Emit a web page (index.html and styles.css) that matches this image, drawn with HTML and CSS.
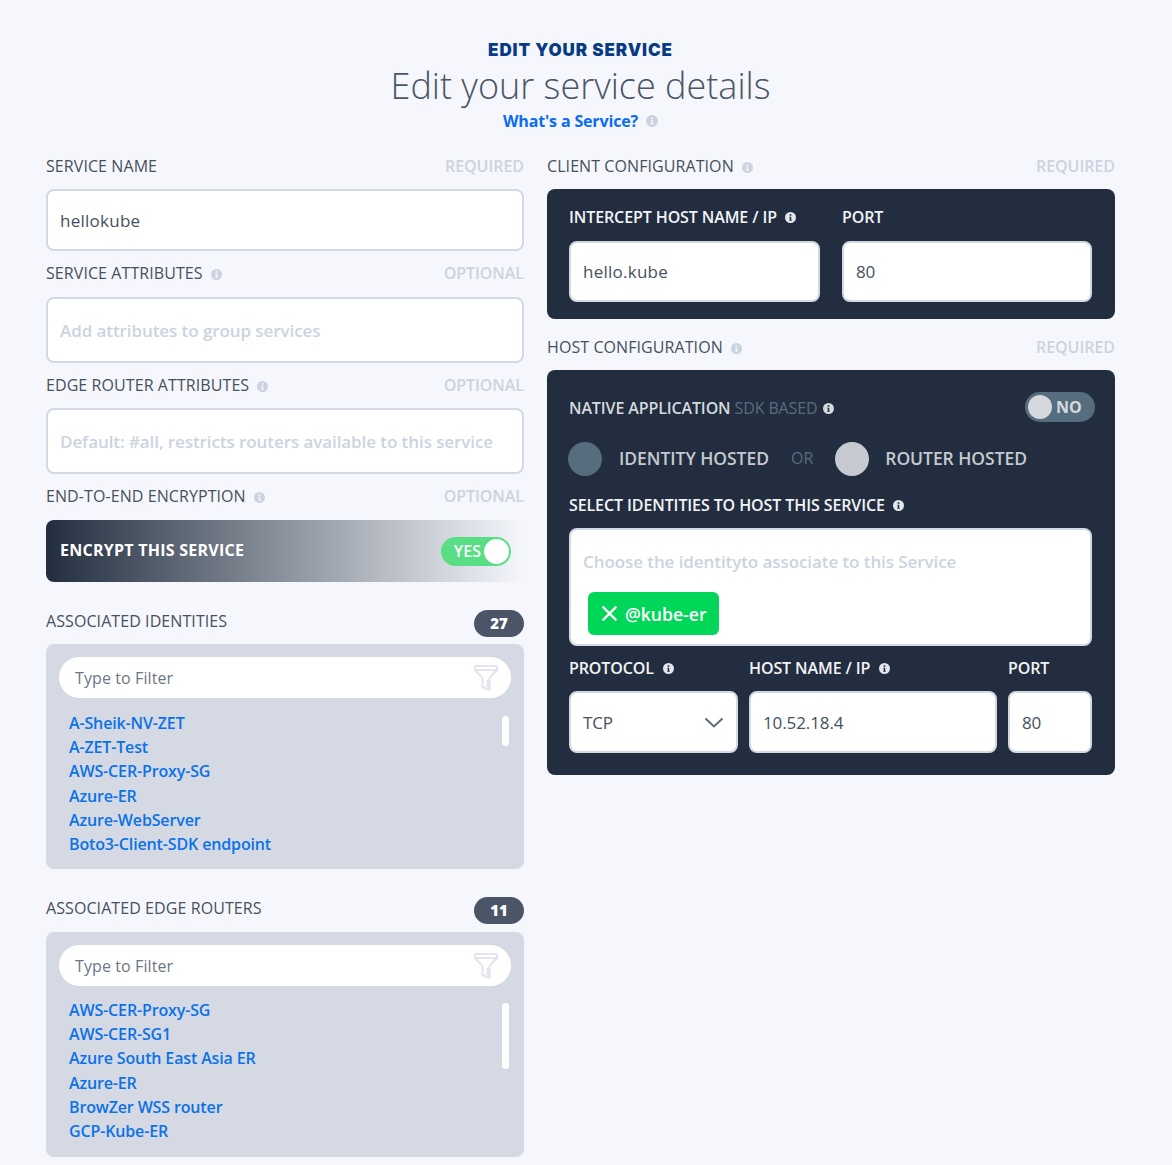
FILE: index.html
```html
<!DOCTYPE html>
<html lang="en">
<head>
<meta charset="utf-8">
<title>Edit your service</title>
<link rel="stylesheet" href="styles.css">
</head>
<body>
<svg class="defs" width="0" height="0" aria-hidden="true">
  <symbol id="info" viewBox="0 0 12 12"><path fill="currentColor" fill-rule="evenodd" d="M6 0a6 6 0 1 1 0 12A6 6 0 0 1 6 0zM5 2.400v1.700h2V2.400zM4.600 5.100v1h.6v2.400h-.6v1h2.800v-1h-.6V5.100z"/></symbol>
  <symbol id="funnel" viewBox="0 0 24 27"><path fill="none" stroke="currentColor" stroke-width="2" stroke-linejoin="round" d="M2 2h20a1 1 0 0 1 1 1v3l-7.500 8v7l-1.500-1-1 1.500 2.500 1v3.500l-7-3V14L1 6V3a1 1 0 0 1 1-1zM1 6h22M15.500 17h-2.500l2.500 3"/></symbol>
</svg>
<main class="page">
  <header class="head">
    <div class="eyebrow">EDIT YOUR SERVICE</div>
    <h1 class="title">Edit your service details</h1>
    <div class="help"><a class="help-link">What's a Service?</a><svg class="ico ico-head"><use href="#info"/></svg></div>
  </header>
  <div class="cols">
    <section class="col">
      <div class="lab first"><span>SERVICE NAME</span><em>REQUIRED</em></div>
      <div class="field h62">hellokube</div>
      <div class="lab m13"><span>SERVICE ATTRIBUTES<svg class="ico"><use href="#info"/></svg></span><em>OPTIONAL</em></div>
      <div class="field h66 ph">Add attributes to group services</div>
      <div class="lab"><span>EDGE ROUTER ATTRIBUTES<svg class="ico"><use href="#info"/></svg></span><em>OPTIONAL</em></div>
      <div class="field h66 ph">Default: #all, restricts routers available to this service</div>
      <div class="lab m13"><span>END-TO-END ENCRYPTION<svg class="ico"><use href="#info"/></svg></span><em>OPTIONAL</em></div>
      <div class="encrypt">
        <span class="encrypt-text">ENCRYPT THIS SERVICE</span>
        <div class="toggle on"><b>YES</b><i></i></div>
      </div>
      <div class="assoc-head"><span>ASSOCIATED IDENTITIES</span><b class="badge">27</b></div>
      <div class="assoc">
        <div class="filter">Type to Filter<svg class="funnel"><use href="#funnel"/></svg></div>
        <div class="list-wrap">
          <ul class="list">
            <li>A-Sheik-NV-ZET</li><li>A-ZET-Test</li><li>AWS-CER-Proxy-SG</li><li>Azure-ER</li><li>Azure-WebServer</li><li>Boto3-Client-SDK endpoint</li>
          </ul>
          <div class="thumb t30"></div>
        </div>
      </div>
      <div class="assoc-head second"><span>ASSOCIATED EDGE ROUTERS</span><b class="badge">11</b></div>
      <div class="assoc assoc-b">
        <div class="filter">Type to Filter<svg class="funnel"><use href="#funnel"/></svg></div>
        <div class="list-wrap">
          <ul class="list">
            <li>AWS-CER-Proxy-SG</li><li>AWS-CER-SG1</li><li>Azure South East Asia ER</li><li>Azure-ER</li><li>BrowZer WSS router</li><li>GCP-Kube-ER</li>
          </ul>
          <div class="thumb t66"></div>
        </div>
      </div>
    </section>
    <section class="col">
      <div class="lab first"><span>CLIENT CONFIGURATION<svg class="ico"><use href="#info"/></svg></span><em>REQUIRED</em></div>
      <div class="panel client">
        <div class="intercept">
          <div class="cell">
            <div class="dlab">INTERCEPT HOST NAME / IP<svg class="ico ico-d"><use href="#info"/></svg></div>
            <div class="field dark-field">hello.kube</div>
          </div>
          <div class="cell">
            <div class="dlab">PORT</div>
            <div class="field dark-field num">80</div>
          </div>
        </div>
      </div>
      <div class="lab host-lab"><span>HOST CONFIGURATION<svg class="ico"><use href="#info"/></svg></span><em>REQUIRED</em></div>
      <div class="panel host">
        <div class="native">
          <div class="native-text">NATIVE APPLICATION <span>SDK BASED</span><svg class="ico ico-n"><use href="#info"/></svg></div>
          <div class="toggle off"><i></i><b>NO</b></div>
        </div>
        <div class="hosted">
          <i class="dot slate"></i><span class="hosted-a">IDENTITY HOSTED</span>
          <span class="or">OR</span>
          <i class="dot light"></i><span class="hosted-b">ROUTER HOSTED</span>
        </div>
        <div class="dlab select-lab">SELECT IDENTITIES TO HOST THIS SERVICE<svg class="ico ico-d"><use href="#info"/></svg></div>
        <div class="tagbox">
          <div class="tag-ph">Choose the identityto associate to this Service</div>
          <div class="tag"><svg class="x" viewBox="0 0 16 16"><path d="M1.500 1.500l13 13M14.500 1.500l-13 13" fill="none" stroke="currentColor" stroke-width="2.200"/></svg>@kube-er</div>
        </div>
        <div class="triple">
          <div class="cell">
            <div class="dlab">PROTOCOL<svg class="ico ico-d ico-w"><use href="#info"/></svg></div>
            <div class="field tall select num">TCP<svg class="chev" viewBox="0 0 20 11"><path d="M1.500 1.500l8.500 8 8.500-8" fill="none" stroke="currentColor" stroke-width="2"/></svg></div>
          </div>
          <div class="cell">
            <div class="dlab">HOST NAME / IP<svg class="ico ico-d ico-w"><use href="#info"/></svg></div>
            <div class="field tall num">10.52.18.4</div>
          </div>
          <div class="cell">
            <div class="dlab">PORT</div>
            <div class="field tall num">80</div>
          </div>
        </div>
      </div>
    </section>
  </div>
</main>
</body>
</html>
```
FILE: styles.css
```css
* { box-sizing: border-box; }
html, body { margin: 0; padding: 0; }
body {
  background: #f5f7fc;
  font-family: "Open Sans", "Liberation Sans", sans-serif;
  color: #4a5568;
  height: 1165px;
  overflow: hidden;
}
.defs { position: absolute; }
.page { width: 1172px; padding: 0 57px 0 46px; }

.head { height: 155px; padding-top: 39px; text-align: center; }
.eyebrow {
  font-family: Inter, Roboto, sans-serif;
  font-weight: 900;
  font-size: 17px;
  letter-spacing: .9px;
  line-height: 22px;
  color: #073b85;
}
.title {
  margin: 0;
  font-weight: 300;
  font-size: 36px;
  line-height: 50px;
  color: #4a5568;
}
.help { display: flex; justify-content: center; align-items: center; height: 20px; }
.help-link { color: #0a6cf5; font-weight: 700; font-size: 16px; letter-spacing: -.15px; }
.ico { width: 11px; height: 11px; margin-left: 8px; color: #ccd3e0; flex: none; vertical-align: -1px; }
.ico-head { width: 12px; height: 12px; }

.cols { display: grid; grid-template-columns: 478px 568px; column-gap: 23px; }
.col { min-width: 0; }

.lab {
  display: flex;
  justify-content: space-between;
  align-items: center;
  height: 22px;
  margin: 11px 0 12px;
  font-size: 16px;
  font-weight: 500;
  color: #46505f;
}
.lab > span { letter-spacing: .08px; }
.lab.first { margin-top: 0; }
.lab.m13 { margin-bottom: 13px; }
.lab em { font-style: normal; color: #ccd3e0; font-weight: 600; letter-spacing: -.05px; }

.field {
  display: flex;
  align-items: center;
  background: #fff;
  border: 2px solid #d3d9e3;
  border-radius: 8px;
  padding: 0 12px;
  font-size: 17px;
  font-weight: 500;
  letter-spacing: .25px;
  color: #465060;
}
.num { letter-spacing: -.1px; }
.h62 { height: 62px; }
.h66 { height: 66px; }
.ph { color: #ccd3e0; font-weight: 600; letter-spacing: -.08px; }

.encrypt {
  height: 62px;
  border-radius: 8px;
  background: linear-gradient(90deg, #222e3f 0%, rgba(34, 46, 63, 0) 100%);
  display: flex;
  align-items: center;
  justify-content: space-between;
  padding: 0 13px 0 14px;
  color: #fff;
  font-weight: 700;
  font-size: 16px;
}
.encrypt-text { letter-spacing: .25px; padding-bottom: 2px; }
.toggle {
  display: flex;
  align-items: center;
  height: 29px;
  width: 70px;
  border-radius: 15px;
  font-size: 16px;
  color: #fff;
}
.toggle b { font-weight: 600; }
.toggle i { width: 24px; height: 24px; border-radius: 50%; display: block; }
.toggle.on { background: #5ade85; justify-content: flex-end; padding-right: 2px; gap: 3px; }
.toggle.on i { background: #fff; width: 25px; height: 25px; }
.toggle.off { background: #566d7e; height: 30px; padding-left: 3px; gap: 4px; color: #d5d9de; }
.toggle.off b { font-weight: 700; }
.toggle.off i { background: #d5d9de; }

.assoc-head {
  display: flex;
  justify-content: space-between;
  align-items: center;
  height: 27px;
  margin: 28px 0 7px;
  font-size: 16px;
  font-weight: 500;
  color: #46505f;
}
.assoc-head > span { position: relative; top: -3px; letter-spacing: .08px; }
.assoc-head.second { margin-bottom: 8px; }
.badge {
  width: 50px;
  height: 27px;
  border-radius: 14px;
  background: #4a5568;
  color: #fff;
  font-size: 15px;
  font-weight: 800;
  text-align: center;
  line-height: 27px;
}
.assoc {
  height: 225px;
  background: #d5d9e3;
  border-radius: 8px;
  padding: 13px 13px 0;
}
.filter {
  display: flex;
  align-items: center;
  justify-content: space-between;
  height: 41px;
  background: #fff;
  border-radius: 21px;
  padding: 0 13px 0 16px;
  font-size: 16px;
  font-weight: 500;
  letter-spacing: .1px;
  color: #6c7686;
}
.funnel { width: 24px; height: 27px; color: #e2e5ec; }
.list-wrap { position: relative; height: 153px; overflow: hidden; margin-top: 13px; }
.assoc-b .list-wrap { margin-top: 12px; }
.list { margin: 0; padding: 0 0 0 10px; list-style: none; }
.list li {
  height: 24.200px;
  line-height: 24px;
  font-size: 16px;
  font-weight: 550;
  letter-spacing: -.14px;
  color: #0a72e6;
  white-space: nowrap;
}
.thumb { position: absolute; left: 443px; top: 5px; width: 7px; background: #fff; border-radius: 4px; }
.t30 { height: 30px; }
.t66 { height: 66px; }

.panel { background: #222e3f; border-radius: 8px; }
.client { height: 130px; padding: 11px 23px 0 22px; }
.intercept { display: grid; grid-template-columns: 251px 250px; column-gap: 22px; }
.dlab {
  display: flex;
  align-items: center;
  height: 34px;
  font-size: 16px;
  font-weight: 600;
  letter-spacing: -.1px;
  color: #f2f4f7;
}
.client .dlab { height: 34px; margin-bottom: 7px; }
.ico-d { color: #e4e7ec; margin-left: 8px; }
.ico-w { margin-left: 9px; }
.dark-field { height: 61px; }
.tall { height: 62px; }

.host-lab { margin: 17px 0 12px; }
.host { height: 405px; padding: 22px 23px 0 22px; }
.native {
  display: flex;
  align-items: center;
  justify-content: space-between;
  height: 30px;
  margin-right: -3px;
}
.native-text {
  font-size: 16px;
  font-weight: 600;
  letter-spacing: -.12px;
  color: #d5d9de;
  padding-top: 2px;
  display: flex;
  align-items: center;
}
.native-text span { color: #566d7e; margin-left: 4px; font-weight: 400; }
.ico-n { color: #d5d9de; margin-left: 5px; }
.hosted { display: flex; align-items: center; height: 34px; margin: 20px 0 0 -1px; font-size: 17.500px; font-weight: 600; color: #c6cad0; }
.hosted > span { padding-bottom: 2px; }
.dot { width: 34px; height: 34px; border-radius: 50%; display: block; flex: none; }
.slate { background: #566d7e; }
.light { background: #c6cad0; }
.hosted-a { margin-left: 17px; letter-spacing: -.05px; }
.hosted-b { margin-left: 16px; letter-spacing: -.05px; }
.or { margin: 0 22px 0 22px; font-size: 16px; font-weight: 400; color: #566d7e; }
.select-lab { margin-top: 12px; height: 34px; }
.tagbox {
  height: 118px;
  margin-top: 6px;
  background: #fff;
  border: 2px solid #d3d9e3;
  border-radius: 8px;
  padding: 20px 12px 0;
}
.tag-ph { font-size: 17px; line-height: 24px; font-weight: 600; letter-spacing: -.08px; color: #ccd3e0; }
.tag {
  display: inline-flex;
  align-items: center;
  gap: 7px;
  height: 43px;
  width: 131px;
  margin: 18px 0 0 5px;
  padding-left: 13px;
  background: #00d657;
  border-radius: 6px;
  color: #fff;
  font-size: 17.600px;
  font-weight: 600;
  white-space: nowrap;
}
.x { width: 17px; height: 17px; flex: none; }
.triple { display: grid; grid-template-columns: 169px 248px 84px; column-gap: 11px; margin-top: 5px; }
.triple .dlab { margin-bottom: 6px; }
.select { justify-content: space-between; padding-right: 12px; }
.chev { width: 20px; height: 11px; color: #566d7e; }
```
